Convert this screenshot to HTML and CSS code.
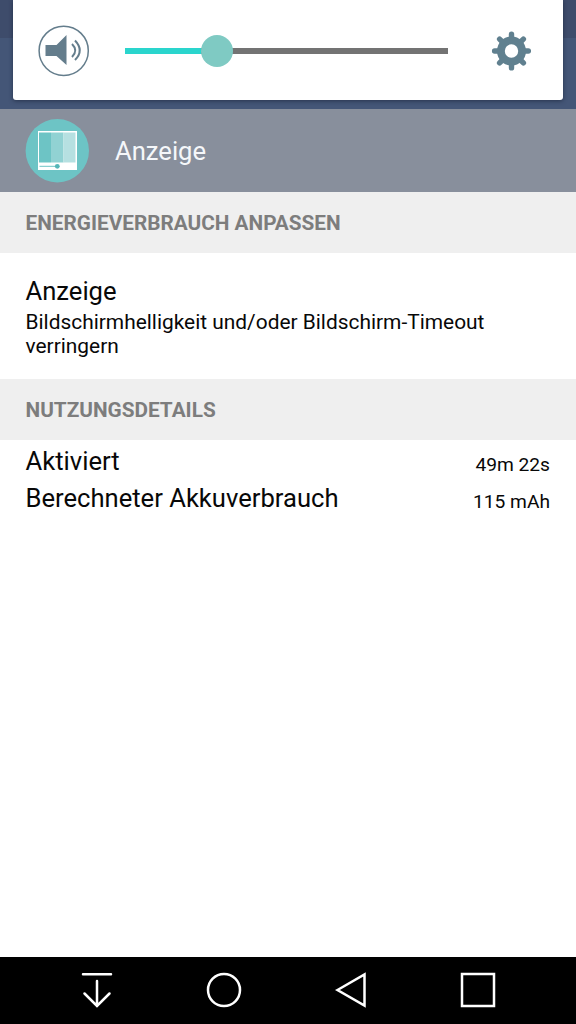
FILE: index.html
```html
<!DOCTYPE html>
<html lang="de">
<head>
<meta charset="utf-8">
<title>Anzeige</title>
<link rel="stylesheet" href="styles.css">
</head>
<body>
<div class="screen">
  <div class="status-bar"></div>
  <div class="action-bar"></div>

  <section class="volume-panel">
    <svg class="speaker" viewBox="0 0 52 52" width="52" height="52">
      <circle cx="25.700" cy="25.800" r="24.600" fill="#fff" stroke="#647d8c" stroke-width="1.500"/>
      <path d="M7.500 20H18.500L28.500 10V40L18.500 31H7.500Z" fill="#647d8c"/>
      <path d="M34 19Q40.500 25.500 34 32M37 15.500Q46.500 25.500 37 35" fill="none" stroke="#647d8c" stroke-width="2"/>
    </svg>
    <div class="slider">
      <div class="slider-level"></div>
      <div class="slider-thumb"></div>
    </div>
    <svg class="gear" viewBox="-20.500 -20 40 40" width="40" height="40">
      <circle r="10.600" fill="none" stroke="#60808f" stroke-width="7.800"/>
      <g stroke="#60808f" stroke-width="5.400" stroke-linecap="round">
        <path d="M0-13V-16.900M0 13V16.900M-13 0H-16.900M13 0H16.900M-9-9L-11.900-11.900M9-9L11.900-11.900M-9 9L-11.900 11.900M9 9L11.900 11.900"/>
      </g>
    </svg>
  </section>

  <header class="app-header">
    <svg class="display-icon" viewBox="0 0 64 64" width="64" height="64">
      <circle cx="32.300" cy="31.700" r="31.700" fill="#6dc4c5"/>
      <path d="M13 12H52V51H13Z" fill="#fff"/>
      <path d="M14 13.500H26V43.500H14Z" fill="#6dc4c5"/>
      <path d="M26 13.500H38.500V43.500H26Z" fill="#91d2d3"/>
      <path d="M38.500 13.500H50.500V43.500H38.500Z" fill="#b6e0e1"/>
      <path d="M14.500 47.300H32" stroke="#6dc4c5" stroke-width="1"/>
      <circle cx="32.300" cy="47.300" r="2.400" fill="#56b6b8"/>
    </svg>
    <h1 class="app-title">Anzeige</h1>
  </header>

  <h2 class="section-title">ENERGIEVERBRAUCH ANPASSEN</h2>
  <section class="setting">
    <div class="setting-name">Anzeige</div>
    <div class="setting-note">Bildschirmhelligkeit und/oder Bildschirm-Timeout verringern</div>
  </section>
  <h2 class="section-title">NUTZUNGSDETAILS</h2>
  <section class="details">
    <div class="detail"><span>Aktiviert</span><span class="detail-value">49m 22s</span></div>
    <div class="detail"><span>Berechneter Akkuverbrauch</span><span class="detail-value">115 mAh</span></div>
  </section>

  <nav class="nav-bar">
    <svg viewBox="0 0 40 40" width="40" height="40"><path d="M6 4.300H34M20 11V35M7.500 23.500L20 36L32.500 23.500" stroke-linecap="round"/></svg>
    <svg viewBox="0 0 40 40" width="40" height="40"><circle cx="20" cy="20" r="16"/></svg>
    <svg viewBox="0 0 40 40" width="40" height="40"><path d="M6.500 20L33.500 4.500V35.500Z"/></svg>
    <svg viewBox="0 0 40 40" width="40" height="40"><path d="M4 4H36V36H4Z"/></svg>
  </nav>
</div>
</body>
</html>
```
FILE: styles.css
```css
body {
  margin: 0;
  font-family: Roboto, sans-serif;
  color: #080808;
}

.screen {
  position: relative;
  display: flex;
  flex-direction: column;
  height: 1024px;
  overflow: hidden;
  background: #fff;
}

.status-bar {
  height: 38px;
  background: #3e4c6b;
}

.action-bar {
  height: 71px;
  background: #445677;
}

.volume-panel {
  position: absolute;
  top: 0;
  left: 13px;
  box-sizing: border-box;
  display: flex;
  align-items: center;
  width: 550px;
  height: 100px;
  padding: 2px 32px 0 25px;
  border-radius: 0 0 3px 3px;
  background: #fff;
  box-shadow: 0 1px 4px rgba(20, 28, 48, 0.6);
}

.slider {
  display: flex;
  align-items: center;
  width: 323px;
  height: 6px;
  margin: 0 43px 0 35px;
  background: #737373;
}

.slider-level {
  width: 76px;
  height: 6px;
  background: #2ad5cd;
}

.slider-thumb {
  flex: none;
  width: 32px;
  height: 32px;
  border-radius: 50%;
  background: #7fcac3;
}

.speaker,
.gear,
.display-icon {
  flex: none;
}

.app-header {
  display: flex;
  align-items: center;
  gap: 26px;
  height: 83px;
  padding-left: 25px;
  background: #888f9c;
}

.app-title {
  margin: 0;
  font-size: 25.600px;
  font-weight: 400;
  color: #f5f7fa;
}

.section-title {
  height: 61px;
  margin: 0;
  padding-left: 25.500px;
  font-size: 20.750px;
  font-weight: 700;
  line-height: 62px;
  color: #7d7d7d;
  background: #efefef;
}

.setting {
  box-sizing: border-box;
  height: 126px;
  padding: 22px 60px 0 25.500px;
}

.setting-name {
  font-size: 25.600px;
  line-height: 32px;
}

.setting-note {
  margin-top: 3px;
  font-size: 20.900px;
  line-height: 24.300px;
}

.details {
  flex: 1;
  padding: 3px 26px 0 25.500px;
}

.detail {
  display: flex;
  align-items: center;
  justify-content: space-between;
  height: 37px;
  font-size: 25.600px;
  line-height: 34px;
}

.detail > :first-child {
  padding-bottom: 2px;
}

.detail-value {
  padding-top: 6px;
  font-size: 19.200px;
}

.nav-bar {
  box-sizing: border-box;
  display: flex;
  justify-content: space-between;
  height: 67px;
  padding: 13px 78px 0 77px;
  background: #000;
}

.nav-bar svg {
  fill: none;
  stroke: #fff;
  stroke-width: 2.500;
}
```
